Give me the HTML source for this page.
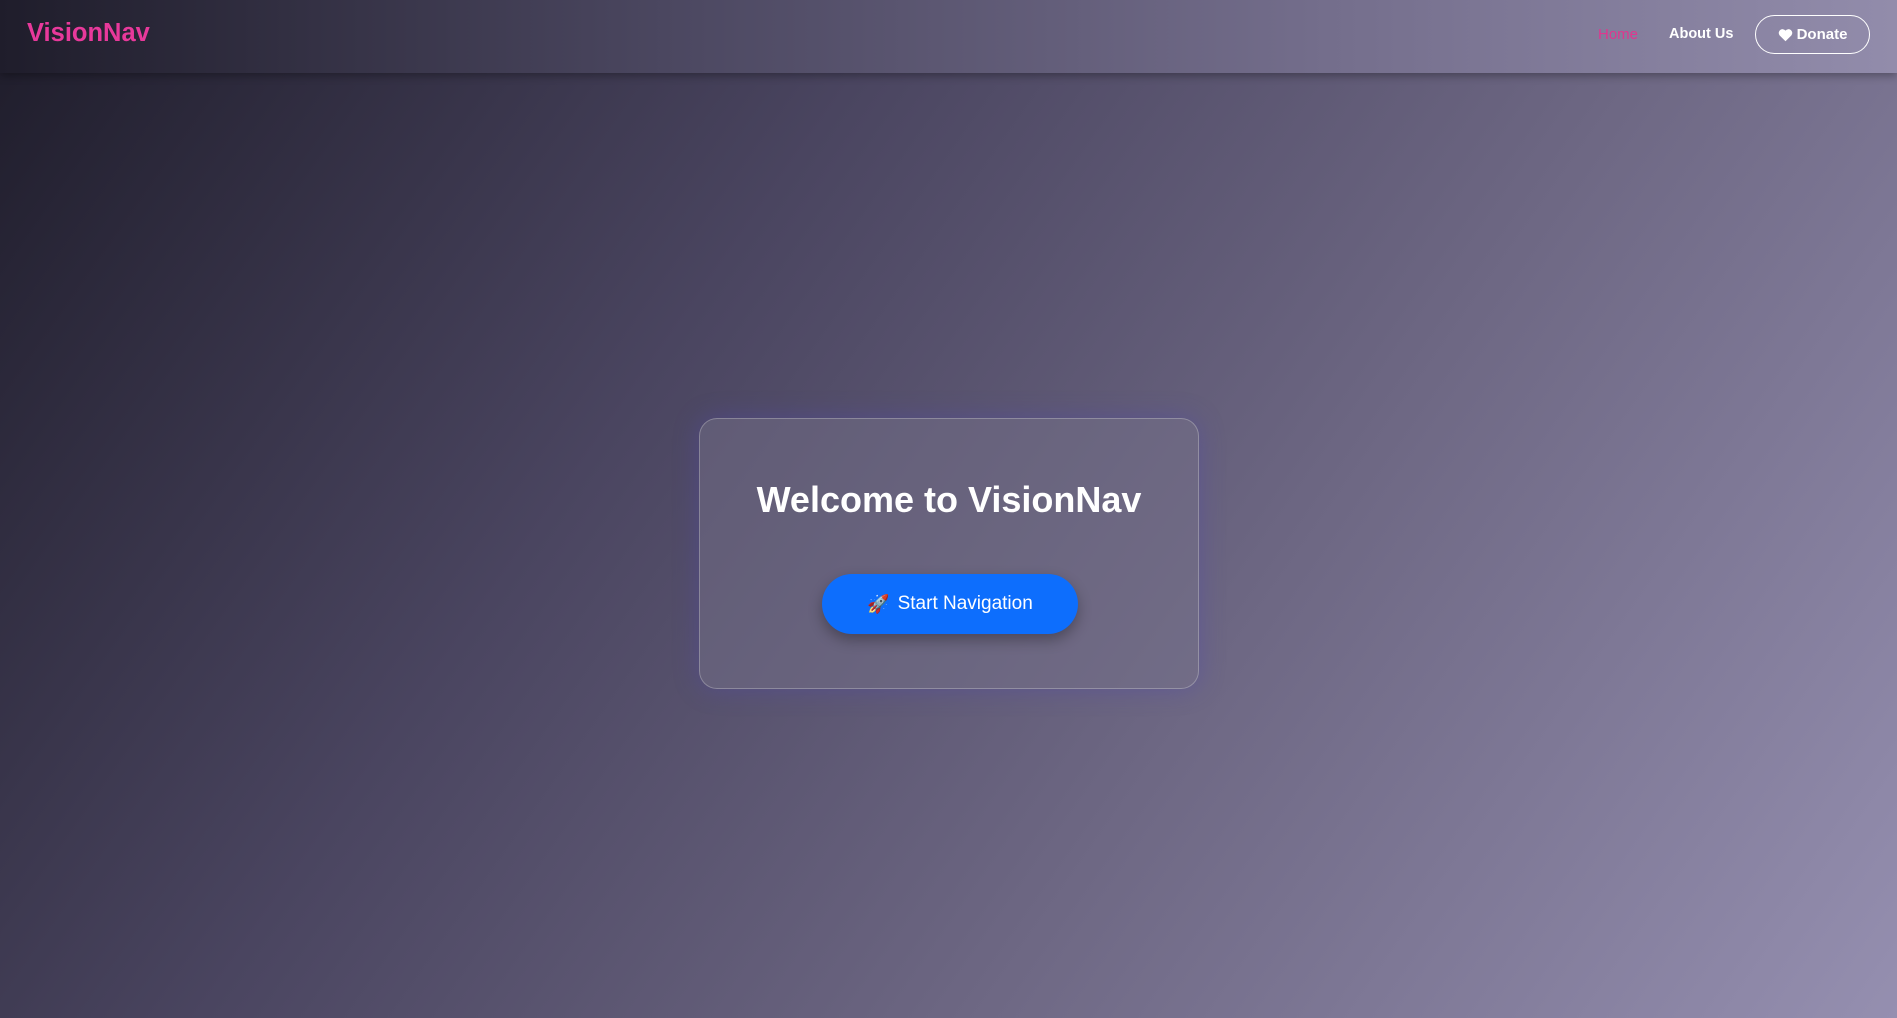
<!DOCTYPE html>
<html><head><meta charset="utf-8"><style>
*{margin:0;padding:0;box-sizing:border-box}
html,body{width:1897px;height:1018px;overflow:hidden}
body{font-family:"Liberation Sans",sans-serif;background:linear-gradient(125deg,#1e1c2a 0%,#4a4560 35%,#6e6884 65%,#958fb0 100%);position:relative}
header{position:absolute;left:0;top:0;width:1897px;height:73px;background:linear-gradient(90deg,#1f1d2b 0%,#4b4760 35%,#746e8c 70%,#928cab 100%);box-shadow:0 3px 8px rgba(0,0,0,.3)}
.logo{position:absolute;left:27px;top:19px;font-size:25.5px;font-weight:bold;color:#e8399b}
.home{position:absolute;left:1598px;top:26px;font-size:15px;color:#e0368f}
.about{position:absolute;left:1669px;top:26px;font-size:14.5px;font-weight:bold;color:#fff}
.donate{position:absolute;left:1755px;top:15px;width:115px;height:39px;border:1.5px solid #fff;border-radius:20px;color:#fff;font-size:15px;font-weight:bold;display:flex;align-items:center;justify-content:center;gap:4px}
.card{position:absolute;left:699px;top:418px;width:500px;height:271px;border-radius:18px;background:rgba(120,115,140,.45);border:1px solid rgba(255,255,255,.25);box-shadow:0 0 25px rgba(80,70,170,.45);text-align:center}
h1{margin-top:60px;font-size:36px;font-weight:bold;color:#fff}
.btn{position:absolute;left:122px;top:155px;width:256px;height:60px;border-radius:30px;background:#0d6efd;color:#fff;font-size:19px;display:flex;align-items:center;justify-content:center;box-shadow:0 6px 14px rgba(0,0,0,.3)}
</style></head><body>
<header>
<div class="logo">VisionNav</div>
<div class="home">Home</div>
<div class="about">About Us</div>
<div class="donate"><svg width="15" height="14" viewBox="0 0 24 22"><path d="M12 21 L2.5 11.5 A5.5 5.5 0 0 1 12 4 A5.5 5.5 0 0 1 21.5 11.5 Z" fill="#fff"/></svg>Donate</div>
</header>
<div class="card">
<h1>Welcome to VisionNav</h1>
<div class="btn"><span style="font-size:18px;margin-right:8px">🚀</span>Start Navigation</div>
</div>
</body></html>
